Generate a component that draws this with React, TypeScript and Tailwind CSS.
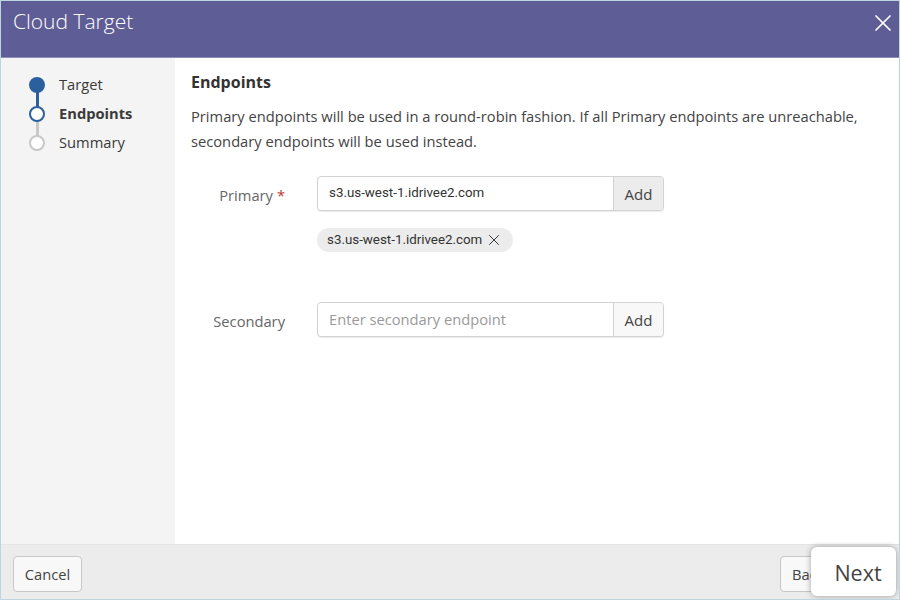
import { X } from "lucide-react";

const steps = [
  { label: "Target", state: "done" },
  { label: "Endpoints", state: "active" },
  { label: "Summary", state: "todo" },
];

const dotClass: Record<string, string> = {
  done: "bg-[#2b5f9e] border-[#2b5f9e]",
  active: "bg-white border-[#2b5f9e]",
  todo: "bg-white border-[#c8c8c8]",
};

function Stepper() {
  return (
    <div className="flex flex-col pl-[28px] pt-[12px]">
      {steps.map((step, i) => (
        <div key={step.label} className="relative flex h-[29px] items-center">
          {i < steps.length - 1 && (
            <div
              className={`absolute left-[6.5px] top-[20px] h-[18px] w-[3px] ${
                i === 0 ? "bg-[#2b5f9e]" : "bg-[#c8c8c8]"
              }`}
            />
          )}
          <div className={`relative z-10 h-[16px] w-[16px] rounded-full border-2 ${dotClass[step.state]}`} />
          <span
            className={`ml-[14px] text-[14.7px] text-[#3a3a3a] ${
              step.state === "active" ? "font-bold" : ""
            }`}
          >
            {step.label}
          </span>
        </div>
      ))}
    </div>
  );
}

function EndpointField({
  label,
  required,
  value,
  placeholder,
  addPressed,
}: {
  label: string;
  required?: boolean;
  value?: string;
  placeholder?: string;
  addPressed?: boolean;
}) {
  return (
    <div className="flex items-center">
      <div className="flex w-[94px] justify-end pt-[4px] text-[14.7px] text-[#666]">
        {label}
        {required && <span className="ml-[4px] text-[#c0392b]">*</span>}
      </div>
      <div className="ml-[32px] flex h-[35px] w-[347px] rounded-[4px] border border-[#d2d2d2] bg-white shadow-[0_1px_1px_rgba(0,0,0,0.08)]">
        <div
          className={`flex flex-1 items-center px-[11px] ${
            value
              ? "font-['Roboto',sans-serif] text-[13.35px] text-[#333]"
              : "text-[14.7px] text-[#9a9a9a]"
          }`}
        >
          {value ?? placeholder}
        </div>
        <div
          className={`flex w-[50px] items-center justify-center rounded-r-[4px] border-l border-[#d2d2d2] pt-[1px] text-[15px] text-[#444] ${
            addPressed ? "bg-[#ececec]" : "bg-[#f8f8f8]"
          }`}
        >
          Add
        </div>
      </div>
    </div>
  );
}

export default function App() {
  return (
    <div className="relative flex h-[600px] w-[900px] flex-col overflow-hidden border border-[#bcd5de] bg-white font-['Open_Sans',sans-serif]">
      <header className="flex h-[57px] shrink-0 items-center justify-between border-b border-[#8f8db8] bg-[#5f5d96] pl-[12px] pr-[2px]">
        <h1 className="pb-[15px] text-[21px] font-light text-white">Cloud Target</h1>
        <X className="mb-[12px] h-[28px] w-[28px] text-white" strokeWidth={1.5} />
      </header>
      <div className="flex min-h-0 flex-1">
        <aside className="w-[174px] shrink-0 bg-[#f4f4f4]">
          <Stepper />
        </aside>
        <main className="flex-1 pl-[16px] pr-[30px] pt-[14px]">
          <h2 className="text-[16px] font-bold leading-[20px] text-[#333]">Endpoints</h2>
          <p className="mt-[12px] text-[14.7px] leading-[25px] text-[#444]">
            Primary endpoints will be used in a round-robin fashion. If all Primary endpoints are unreachable,
            secondary endpoints will be used instead.
          </p>
          <div className="mt-[22px]">
            <EndpointField label="Primary" required value="s3.us-west-1.idrivee2.com" addPressed />
            <div className="ml-[126px] mt-[17px] flex h-[24px] w-[196px] items-center rounded-full bg-[#ececec] pl-[10px] font-['Roboto',sans-serif] text-[13.35px] text-[#333]">
              s3.us-west-1.idrivee2.com
              <X className="ml-[3px] h-[18px] w-[18px] text-[#333]" strokeWidth={1.3} />
            </div>
            <div className="mt-[50px]">
              <EndpointField label="Secondary" placeholder="Enter secondary endpoint" />
            </div>
          </div>
        </main>
      </div>
      <footer className="flex h-[55px] shrink-0 items-center justify-between border-t border-[#e4e4e4] bg-[#ececec] px-[12px] pt-[4px]">
        <button className="h-[36px] w-[69px] rounded-[4px] border border-[#c8c8c8] bg-[#f8f8f8] pt-[1px] text-[14.7px] text-[#444]">
          Cancel
        </button>
        <button className="mr-[30px] h-[36px] w-[77px] rounded-[4px] border border-[#c8c8c8] bg-[#f8f8f8] pl-[11px] pt-[1px] text-left text-[14.7px] text-[#444]">
          Back
        </button>
      </footer>
      <button className="absolute bottom-[3px] right-[3px] h-[49px] w-[85px] rounded-[6px] bg-white pl-[9px] pt-[3px] text-[21.5px] text-[#444] shadow-[0_0_6px_rgba(0,0,0,0.35)]">
        Next
      </button>
    </div>
  );
}
